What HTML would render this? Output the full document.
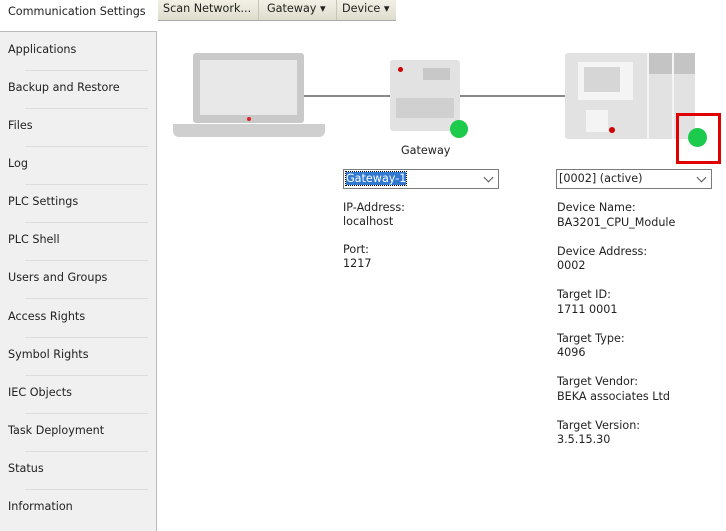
<html><head><style>
body{margin:0;width:726px;height:530px;background:#fff;font-family:"DejaVu Sans","Liberation Sans",sans-serif;font-size:11.2px;color:#222;position:relative;overflow:hidden}
.a{position:absolute;white-space:nowrap}
.side{position:absolute;left:0;top:31px;width:156px;height:499px;background:#f0f0f0;border-right:1px solid #bbb;border-top:1px solid #bbb}
.it{position:absolute;left:8px;font-size:11.2px}
.sep{position:absolute;left:25px;width:123px;height:1px;background:#ddd}
.tb{position:absolute;top:0;left:158px;height:20px;width:238px;background:linear-gradient(#f3f1e6,#dedccc);border-bottom:1px solid #aaa}
.tb span{position:absolute;top:2px;font-size:11.2px}
.dd{position:absolute;height:20px;border:1px solid #7a7a7a;background:#fff;font-size:11.2px;line-height:18px;padding-left:2px;box-sizing:border-box}
.dd i{position:absolute;right:6px;top:4px;width:6px;height:6px;border-right:1px solid #555;border-bottom:1px solid #555;transform:rotate(45deg)}
.g{position:absolute;background:#e2e2e2}
</style></head><body>
<div class="a" style="left:8px;top:5px">Communication Settings</div>
<div class="tb"><span style="left:5px">Scan Network...</span><span style="left:100px;top:0;width:1px;height:20px;background:#c8c6b8"></span><span style="left:109px">Gateway ▾</span><span style="left:178px;top:0;width:1px;height:20px;background:#c8c6b8"></span><span style="left:184px">Device ▾</span></div>
<div class="side">
<div class="it" style="top:11px">Applications</div><div class="sep" style="top:38px"></div>
<div class="it" style="top:49px">Backup and Restore</div><div class="sep" style="top:76px"></div>
<div class="it" style="top:87px">Files</div><div class="sep" style="top:114px"></div>
<div class="it" style="top:125px">Log</div><div class="sep" style="top:152px"></div>
<div class="it" style="top:163px">PLC Settings</div><div class="sep" style="top:190px"></div>
<div class="it" style="top:201px">PLC Shell</div><div class="sep" style="top:228px"></div>
<div class="it" style="top:239px">Users and Groups</div><div class="sep" style="top:266px"></div>
<div class="it" style="top:278px">Access Rights</div><div class="sep" style="top:305px"></div>
<div class="it" style="top:316px">Symbol Rights</div><div class="sep" style="top:343px"></div>
<div class="it" style="top:354px">IEC Objects</div><div class="sep" style="top:381px"></div>
<div class="it" style="top:392px">Task Deployment</div><div class="sep" style="top:419px"></div>
<div class="it" style="top:430px">Status</div><div class="sep" style="top:457px"></div>
<div class="it" style="top:468px">Information</div>
</div>
<div class="a" style="left:304px;top:95px;width:86px;height:2px;background:#888"></div>
<div class="a" style="left:460px;top:95px;width:105px;height:2px;background:#888"></div>
<div class="g" style="left:193px;top:53px;width:111px;height:70px;background:#c9c9c9;border-radius:3px"></div>
<div class="a" style="left:200px;top:60px;width:97px;height:55px;background:#e8e8e8"></div>
<div class="a" style="left:247px;top:117px;width:4px;height:4px;border-radius:50%;background:#d22"></div>
<div class="g" style="left:173px;top:124px;width:152px;height:13px;background:#cfcfcf;border-radius:0 0 6px 6px"></div>
<div class="g" style="left:390px;top:60px;width:70px;height:71px;border-radius:3px"></div>
<div class="a" style="left:398px;top:67px;width:5px;height:5px;border-radius:50%;background:#c00"></div>
<div class="a" style="left:423px;top:68px;width:27px;height:12px;background:#c8c8c8"></div>
<div class="a" style="left:396px;top:98px;width:58px;height:20px;background:#d0d0d0"></div>
<div class="a" style="left:450px;top:120px;width:18px;height:18px;border-radius:50%;background:#1ccb4c"></div>
<div class="a" style="left:401px;top:144px">Gateway</div>
<div class="g" style="left:565px;top:53px;width:130px;height:86px;border-radius:3px"></div>
<div class="a" style="left:578px;top:62px;width:55px;height:38px;background:#f4f4f4"></div>
<div class="a" style="left:584px;top:67px;width:36px;height:25px;background:#d6d6d6"></div>
<div class="a" style="left:647px;top:53px;width:2px;height:86px;background:#f4f4f4"></div>
<div class="a" style="left:672px;top:53px;width:2px;height:86px;background:#f4f4f4"></div>
<div class="a" style="left:649px;top:53px;width:23px;height:21px;background:#c4c4c4"></div>
<div class="a" style="left:674px;top:53px;width:21px;height:21px;background:#c4c4c4"></div>
<div class="a" style="left:586px;top:110px;width:22px;height:22px;background:#f4f4f4"></div>
<div class="a" style="left:609px;top:127px;width:6px;height:6px;border-radius:50%;background:#c00"></div>
<div class="a" style="left:676px;top:113px;width:39px;height:45px;border:3px solid #e00000"></div>
<div class="a" style="left:688px;top:128px;width:19px;height:19px;border-radius:50%;background:#1ccb4c"></div>
<div class="dd" style="left:343px;top:169px;width:156px"><span style="background:#3078d0;color:#fff;outline:1px dotted #000">Gateway-1</span><i></i></div>
<div class="dd" style="left:556px;top:169px;width:156px">[0002] (active)<i></i></div>
<div class="a" style="left:343px;top:201px;line-height:14px">IP-Address:<br>localhost<br><br>Port:<br>1217</div>
<div class="a" style="left:557px;top:201px;line-height:14.5px">Device Name:<br>BA3201_CPU_Module<br><br>Device Address:<br>0002<br><br>Target ID:<br>1711 0001<br><br>Target Type:<br>4096<br><br>Target Vendor:<br>BEKA associates Ltd<br><br>Target Version:<br>3.5.15.30</div>
</body></html>
